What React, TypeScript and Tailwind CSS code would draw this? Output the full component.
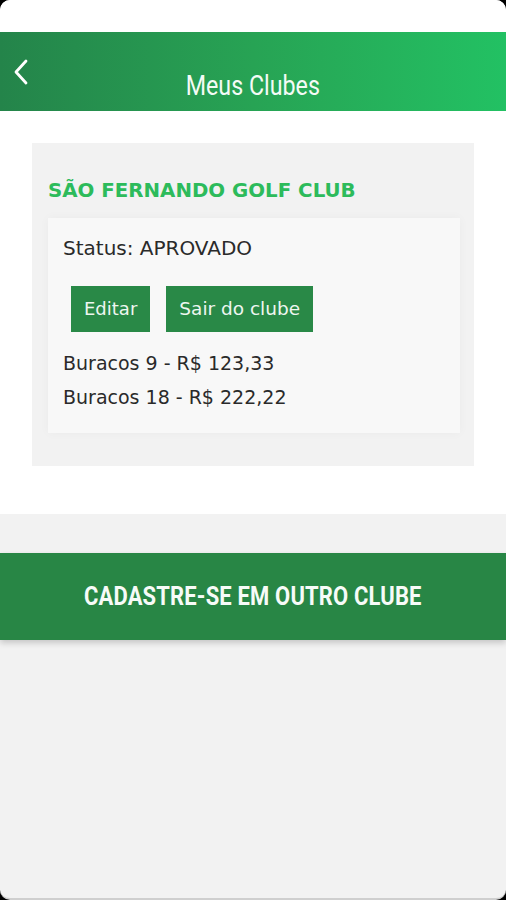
import React from 'react';

const body = { fontFamily: '"DejaVu Sans", "Noto Sans", sans-serif' };
const cond = { fontFamily: 'Roboto, "Liberation Sans", sans-serif' };

function BackArrow() {
  return (
    <svg width="16" height="26" viewBox="0 0 16 26" className="block">
      <polyline
        points="13,2 3,13 13,24"
        fill="none"
        stroke="#ffffff"
        strokeWidth="2.8"
        strokeLinecap="round"
        strokeLinejoin="round"
      />
    </svg>
  );
}

export default function App() {
  const prices = [
    { holes: 9, price: '123,33' },
    { holes: 18, price: '222,22' },
  ];

  return (
    <div className="w-[506px] h-[900px] bg-black">
      <div className="h-full flex flex-col rounded-[10px] overflow-hidden bg-[#f2f2f2] border-b-2 border-[#cfcfcf]">
        <div className="h-[32px] bg-white shrink-0" />

        <header className="h-[79px] shrink-0 relative flex items-center justify-center bg-gradient-to-r from-[#24844a] via-[#27a354] to-[#22c163]">
          <button className="absolute left-[13px] top-[27px]">
            <BackArrow />
          </button>
          <h1 className="pt-[28px] text-[28px] leading-[32px] text-[#f4fbf6]" style={cond}>
            <span className="inline-block scale-x-[0.83]">Meus Clubes</span>
          </h1>
        </header>

        <section className="bg-white px-[32px] pt-[32px] pb-[48px] shrink-0">
          <div className="bg-[#f2f2f2] pt-[36px] pb-[33px] pl-[16px] pr-[14px]">
            <h2 className="text-[19.8px] leading-[24px] font-bold text-[#2dbb5b]" style={body}>
              SÃO FERNANDO GOLF CLUB
            </h2>

            <div className="mt-[15px] bg-[#f8f8f8] shadow-[0_0_10px_rgba(0,0,0,0.035)] px-[15px] pt-[18px] pb-[19px]" style={body}>
              <p className="text-[20px] leading-[24px] text-[#2a2a2a]">Status: APROVADO</p>

              <div className="mt-[26px] ml-[8px] flex gap-[16px]">
                <button className="h-[46px] px-[13px] bg-[#298947] text-[#eef6f0] text-[18px] leading-none">
                  Editar
                </button>
                <button className="h-[46px] px-[13px] bg-[#298947] text-[#eef6f0] text-[18.5px] leading-none">
                  Sair do clube
                </button>
              </div>

              <div className="mt-[14px] text-[19px] leading-[34px] text-[#2a2a2a]">
                {prices.map((p) => (
                  <p key={p.holes}>
                    Buracos {p.holes} - R$ {p.price}
                  </p>
                ))}
              </div>
            </div>
          </div>
        </section>

        <div className="h-[39px] shrink-0" />

        <button
          className="h-[87px] shrink-0 w-full bg-[#288645] flex items-center justify-center shadow-[0_3px_6px_rgba(0,0,0,0.18)]"
          style={cond}
        >
          <span className="inline-block scale-x-[0.845] text-[26px] font-bold text-[#f7fbf8] tracking-[0.2px]">
            CADASTRE-SE EM OUTRO CLUBE
          </span>
        </button>
      </div>
    </div>
  );
}
